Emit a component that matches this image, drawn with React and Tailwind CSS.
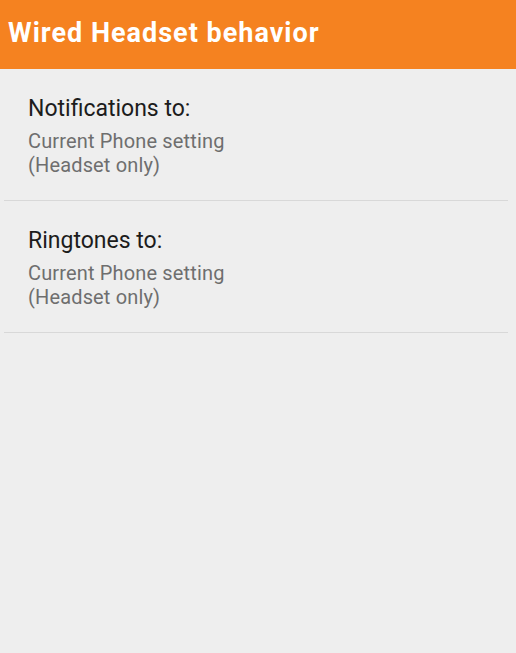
const ITEMS = [
  { title: 'Notifications to:', lines: ['Current Phone setting', '(Headset only)'] },
  { title: 'Ringtones to:', lines: ['Current Phone setting', '(Headset only)'] },
];

export default function App() {
  return (
    <div className="w-[516px] h-[653px] bg-[#eeeeee] font-['Roboto',sans-serif] overflow-hidden">
      <div className="h-[69px] bg-[#f58220] flex items-center px-2">
        <h1 className="text-white font-bold text-[27px] tracking-[1px] leading-none mb-[3px]">Wired Headset behavior</h1>
      </div>
      <div className="pl-1 pr-2">
        {ITEMS.map((item) => (
          <div key={item.title} className="border-b border-[#d8d8d8] pl-6 pt-[26px] pb-[23px]">
            <div className="text-[23px] leading-[28px] text-[#1c1c1c]">{item.title}</div>
            <div className="mt-[6px] text-[20px] tracking-[0.15px] leading-[24px] text-[#6e6e6e]">
              {item.lines.map((l) => (
                <div key={l}>{l}</div>
              ))}
            </div>
          </div>
        ))}
      </div>
    </div>
  );
}
